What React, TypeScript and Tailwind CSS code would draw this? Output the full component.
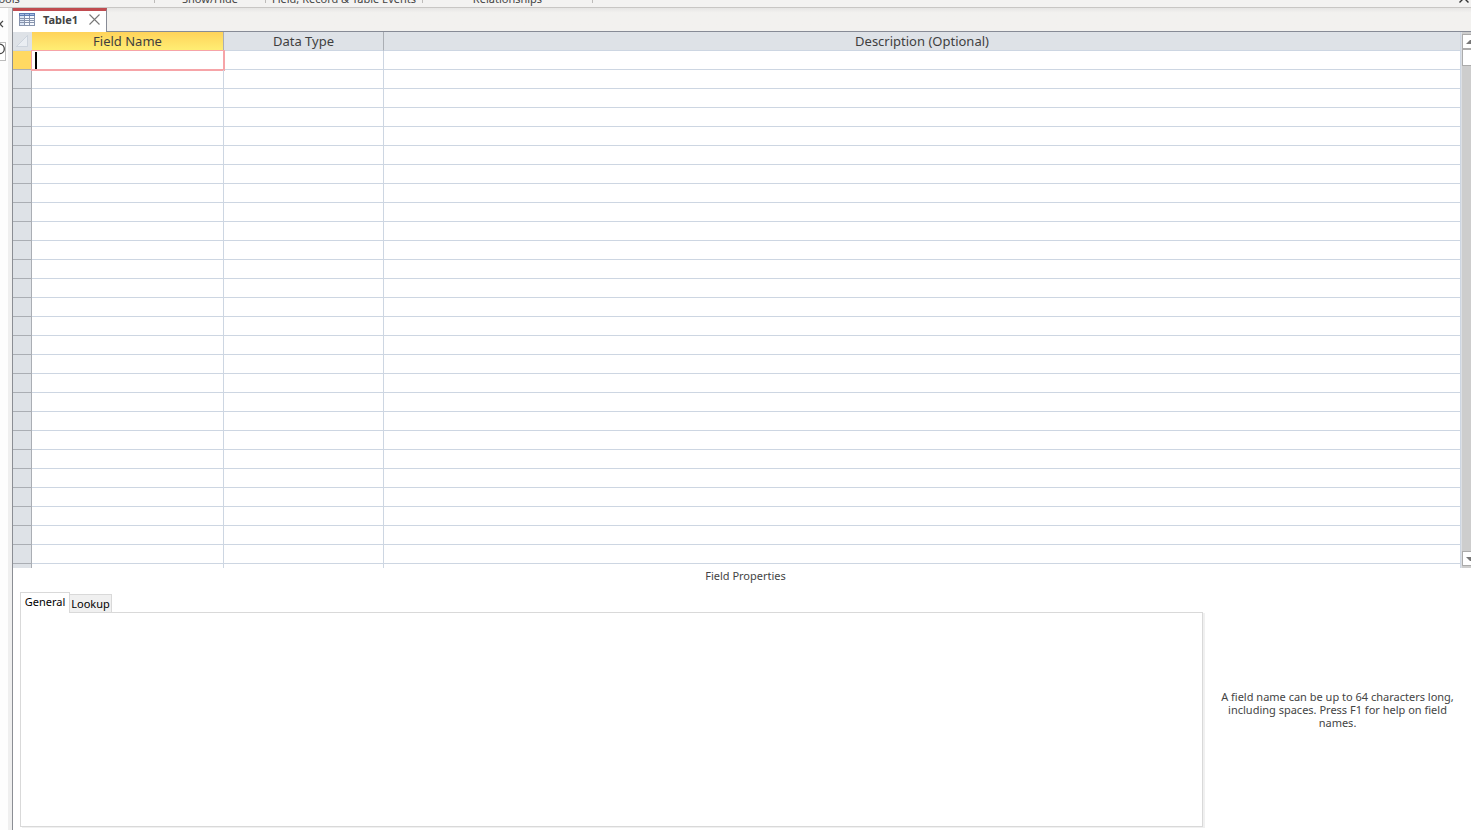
import React from 'react';

const ROWS = Array.from({ length: 32 }, (_, i) => i);

function Ribbon() {
  return (
    <header className="flex h-2 shrink-0 items-end overflow-hidden border-b border-[#c8c6c4] bg-[#f3f2f1] text-[11px] leading-[20px] whitespace-nowrap text-[#444]">
      <div className="mb-1 -ml-[141px] h-3.5 w-[296px] shrink-0 border-r border-[#bdbbb9] text-center">Tools</div>
      <div className="mb-1 h-3.5 w-[111px] shrink-0 border-r border-[#bdbbb9] text-center">Show/Hide</div>
      <div className="mb-1 h-3.5 w-[157px] shrink-0 border-r border-[#bdbbb9] text-center">Field, Record &amp; Table Events</div>
      <div className="mb-1 h-3.5 w-[170px] shrink-0 border-r border-[#bdbbb9] text-center">Relationships</div>
      <button aria-label="Collapse the ribbon" className="mr-0.5 mb-1 ml-auto">
        <svg width="10" height="10" viewBox="0 0 10 10" fill="none" stroke="#333" strokeWidth="1.4">
          <path d="M.5 9.500 5 5l4.500 4.500M3.500 5h3" />
        </svg>
      </button>
    </header>
  );
}

function NavigationEdge() {
  return (
    <aside className="flex w-[13px] shrink-0 border-r border-[#8b8e94] bg-[#efefef]">
      <div className="w-2 bg-[#fdfdfd] pt-3">
        <button aria-label="Close navigation pane" className="block">
          <svg width="4" height="8" viewBox="0 0 4 8" fill="none" stroke="#444" strokeWidth="1.200">
            <path d="M3 .8 0 4l3 3.200" />
          </svg>
        </button>
        <button aria-label="Search" className="mt-3.5 block h-[19px] w-1.5 border border-l-0 border-[#bcbcbc] bg-white">
          <svg width="5" height="17" viewBox="0 0 5 17" fill="none" stroke="#444" strokeWidth="1.300">
            <path d="M0 1.200A4.700 4.700 0 0 1 4.300 5.900 4.700 4.700 0 0 1 0 10.600" />
          </svg>
        </button>
      </div>
    </aside>
  );
}

function DocumentTabs() {
  return (
    <div className="flex h-6 shrink-0 border-b border-[#878b96] bg-gradient-to-b from-[#e6e5e4] to-[#f2f1ef] to-20%">
      <div className="z-10 -mb-px flex w-[94px] items-center border-t-3 border-r border-t-[#c04b50] border-r-[#878b96] bg-white pb-1 pl-1.5">
        <svg width="16" height="13" viewBox="0 0 16 13" shapeRendering="crispEdges">
          <path fill="#8794ad" d="M0 0h16v13H0z" />
          <path fill="#5f7db4" d="M0 0h16v3H0z" />
          <path fill="#a7bce0" d="M1 1h4v1H1zM6 1h4v1H6zM11 1h4v1h-4z" />
          <path fill="#dce6f5" d="M1 3h4v2H1zM1 6h4v1H1zM1 8h4v1H1zM1 10h4v2H1z" />
          <path fill="#f6f9ff" d="M6 3h4v2H6zM11 3h4v2h-4zM6 6h4v1H6zM11 6h4v1h-4zM6 8h4v1H6zM11 8h4v1h-4zM6 10h4v2H6zM11 10h4v2h-4z" />
        </svg>
        <a href="#table1" className="ml-2 text-[11px] leading-4 font-bold text-[#444]">Table1</a>
        <button aria-label="Close Table1" className="mr-1.5 ml-auto">
          <svg width="11" height="11" viewBox="0 0 11 11" stroke="#777" strokeWidth="1.100">
            <path d="M.5.5l10 10M10.500.5l-10 10" />
          </svg>
        </button>
      </div>
    </div>
  );
}

function FieldGrid() {
  return (
    <div className="flex min-h-0 flex-1">
      <div className="min-w-0 flex-1 overflow-hidden">
        <table className="w-full table-fixed border-separate border-spacing-0 text-[13px] leading-[18px] text-[#3f3f3f]">
          <colgroup>
            <col className="w-[19px]" />
            <col className="w-48" />
            <col className="w-40" />
            <col />
          </colgroup>
          <thead>
            <tr className="h-[19px] bg-[#dee2e7]">
              <th aria-label="Select all" className="border-r border-b border-r-[#dee2e7] border-b-[#cdd6e2] p-0">
                <svg className="mx-auto block" width="12" height="12" viewBox="0 0 12 12">
                  <path fill="#eaeef3" stroke="#c3cbd6" strokeWidth=".7" d="M11.500.5v11H.5z" />
                </svg>
              </th>
              <th className="border-r border-b border-r-[#aaaeb4] border-b-[#cdd6e2] bg-gradient-to-b from-[#ffd35a] to-[#ffee73] p-0 font-normal">Field Name</th>
              <th className="border-r border-b border-r-[#aaaeb4] border-b-[#cdd6e2] p-0 font-normal">Data Type</th>
              <th className="border-r border-b border-[#cdd6e2] p-0 font-normal">Description (Optional)</th>
            </tr>
          </thead>
          <tbody>
            {ROWS.map((row) => (
              <tr key={row} className="h-[19px]">
                <td className={row === 0 ? 'border-r border-b border-[#aaaeb4] bg-[#ffd962] p-0' : 'border-r border-b border-[#aaaeb4] bg-[#dee2e7] p-0'} />
                <td className="relative border-r border-b border-[#cdd6e2] p-0">
                  {row === 0 && (
                    <div className="absolute -top-px -right-0.5 -bottom-0.5 -left-px flex items-center border-t border-r-2 border-b-2 border-l border-[#f6a4a8] bg-white pl-[3px]">
                      <span className="h-[17px] w-0.5 shrink-0 bg-black" />
                      <input aria-label="Field name" className="h-full min-w-0 flex-1 bg-transparent outline-none" />
                    </div>
                  )}
                </td>
                <td className="border-r border-b border-[#cdd6e2] p-0" />
                <td className="border-r border-b border-[#cdd6e2] p-0" />
              </tr>
            ))}
          </tbody>
        </table>
      </div>
      <div className="flex w-2.5 shrink-0 flex-col overflow-hidden border-l border-[#dcdfe4] bg-[#cdcdcd] pt-0.5 pb-0.5">
        <button aria-label="Scroll up" className="flex h-[15px] w-4 shrink-0 items-center border border-[#ababab] bg-white pl-[3px]">
          <svg className="shrink-0" width="10" height="4" viewBox="0 0 10 4"><path fill="#777" d="M0 4 4 0h2l4 4z" /></svg>
        </button>
        <div className="h-[17px] w-4 shrink-0 border border-[#ababab] bg-white" />
        <button aria-label="Scroll down" className="mt-auto flex h-[15px] w-4 shrink-0 items-center border border-[#ababab] bg-white pl-[3px]">
          <svg className="shrink-0" width="10" height="4" viewBox="0 0 10 4"><path fill="#777" d="M0 0l4 4h2l4-4z" /></svg>
        </button>
      </div>
    </div>
  );
}

function FieldProperties() {
  return (
    <section className="flex h-[262px] shrink-0 flex-col pb-[3px] pl-[7px] text-[11px] leading-[13px]">
      <h2 className="pt-px text-center text-[#444]">Field Properties</h2>
      <div className="mt-2.5 flex h-5 items-end text-black" role="tablist">
        <button role="tab" aria-selected="true" className="z-10 -mb-px h-[21px] w-[50px] border border-b-0 border-[#d9d9d9] bg-white pb-1">General</button>
        <button role="tab" aria-selected="false" className="h-[18px] w-[42px] border border-b-0 border-l-0 border-[#d9d9d9] bg-[#f0f0f0] text-center">Lookup</button>
      </div>
      <div className="flex min-h-0 flex-1">
        <div className="flex-1 border border-[#d9d9d9] bg-white shadow-[2px_1px_0_#f0f0f0]" />
        <p className="mt-[78px] mr-[15px] ml-4 w-[237px] text-center text-[#444]">
          A field name can be up to 64 characters long, including spaces. Press F1 for help on field names.
        </p>
      </div>
    </section>
  );
}

export default function App() {
  return (
    <div className="flex h-screen flex-col overflow-hidden bg-white font-['Noto_Sans','Open_Sans',sans-serif]">
      <Ribbon />
      <div className="flex min-h-0 flex-1">
        <NavigationEdge />
        <main className="flex min-w-0 flex-1 flex-col">
          <DocumentTabs />
          <FieldGrid />
          <FieldProperties />
        </main>
      </div>
    </div>
  );
}
